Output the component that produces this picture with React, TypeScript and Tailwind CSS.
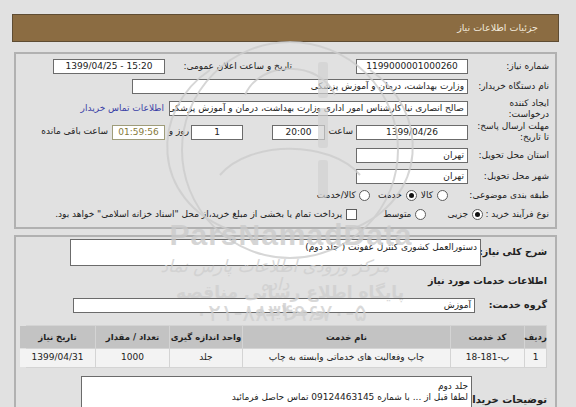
import React from 'react';

function Field({ className = '', children, ltr = false }: { className?: string; children?: React.ReactNode; ltr?: boolean }) {
  return (
    <div
      dir={ltr ? 'ltr' : 'rtl'}
      className={`h-[15px] shrink-0 bg-white border border-[#6b6b6b] flex items-center px-[3px] leading-[13px] overflow-hidden whitespace-nowrap ${className}`}
    >
      {children}
    </div>
  );
}

function Radio({ on = false }: { on?: boolean }) {
  return (
    <span className="w-[11px] h-[11px] shrink-0 rounded-full border border-[#5c5c5c] bg-white flex items-center justify-center">
      {on && <span className="w-[5px] h-[5px] rounded-full bg-[#111]" />}
    </span>
  );
}

function Label({ className = 'w-[75px]', children }: { className?: string; children: React.ReactNode }) {
  return <div className={`shrink-0 text-right leading-[11px] whitespace-nowrap ${className}`}>{children}</div>;
}

const cols = [
  { w: 'w-[21px]', head: 'ردیف', val: '1' },
  { w: 'w-[73px]', head: 'کد خدمت', val: 'پ-181-18' },
  { w: 'w-[207px]', head: 'نام خدمت', val: 'چاپ وفعالیت های خدماتی وابسته به چاپ' },
  { w: 'w-[72px]', head: 'واحد اندازه گیری', val: 'جلد' },
  { w: 'w-[73px]', head: 'تعداد / مقدار', val: '1000' },
  { w: 'w-[75px]', head: 'تاریخ نیاز', val: '1399/04/31' },
];

function Watermark() {
  return (
    <div className="absolute inset-0 pointer-events-none">
      <svg className="absolute left-0 top-0" width="576" height="407" viewBox="0 0 576 407" fill="none">
        <g stroke="#cdcdcd" strokeWidth="2" opacity="0.8">
          <circle cx="290" cy="150" r="108" />
          <path d="M230 230 C 150 200 150 110 210 70" />
          <path d="M350 230 C 430 200 430 110 370 70" />
          <path d="M245 95 C 260 60 320 60 335 95" />
          <path d="M220 175 C 250 140 330 140 360 175" />
        </g>
        <g fill="#d2d2d2" opacity="0.7">
          <rect x="318" y="62" width="10" height="36" rx="3" />
          <rect x="318" y="108" width="10" height="40" rx="3" />
          <rect x="318" y="160" width="10" height="38" rx="3" />
        </g>
      </svg>
      <div className="absolute left-[160px] top-[220px] w-[262px] text-center font-['Liberation_Sans',sans-serif] font-bold text-[30px] leading-[30px] tracking-[1px] text-[#cbcbcb] opacity-80">
        ParsNamadData
      </div>
      <div dir="rtl" className="absolute left-[150px] top-[257px] w-[250px] text-center text-[17px] leading-[18px] text-[#cfcfcf] opacity-80 italic">
        مرکز ورودی اطلاعات پارس نماد داده
      </div>
      <div dir="rtl" className="absolute left-[172px] top-[283px] w-[236px] text-center font-bold text-[17px] leading-[18px] text-[#cfcfcf] opacity-80">
        پایگاه اطلاع رسانی مناقصه و مزایده
      </div>
      <div dir="rtl" className="absolute left-[175px] top-[301px] w-[212px] text-center text-[24px] leading-[24px] text-[#d0d0d0] opacity-80">
        ۰۲۱-۸۸۳۴۹۶۷۰-۵
      </div>
    </div>
  );
}

export default function App() {
  return (
    <div dir="rtl" className="relative w-[576px] h-[407px] overflow-hidden bg-[#e1e1e1] font-['DejaVu_Sans',sans-serif] text-[9px] text-[#222]">
      <div className="pt-[14px] pl-[12px] pr-[17px]">
        <div className="h-[28px] bg-[#8b6c42] border border-[#5e4c33] flex items-center pr-[20px] text-[#f1e9da] text-[9.5px]">
          جزئیات اطلاعات نیاز
        </div>
      </div>

      <div className="mt-[10px] ml-[14px] mr-[19px] border-2 border-[#b1b1b1] pt-[2px] pb-[3px] pr-[6px]">
        <div className="flex items-center h-[20px]">
          <Label>شماره نیاز:</Label>
          <Field ltr className="mr-[6px] w-[112px] justify-center">1199000001000260</Field>
          <Label className="w-[127px] mr-[64px] pl-[4px]">تاریخ و ساعت اعلان عمومی:</Label>
          <Field ltr className="w-[112px] justify-center">1399/04/25 - 15:20</Field>
        </div>
        <div className="flex items-center h-[21px]">
          <Label>نام دستگاه خریدار:</Label>
          <Field className="mr-[6px] w-[336px]">وزارت بهداشت، درمان و آموزش پزشکی</Field>
        </div>
        <div className="flex items-center h-[23px]">
          <Label>
            ایجاد کننده
            <br />
            درخواست:
          </Label>
          <Field className="mr-[6px] w-[299px]">صالح انصاری نیا کارشناس امور اداری وزارت بهداشت، درمان و آموزش پزشکی</Field>
          <div className="mr-[5px] text-[#3a3fa6] whitespace-nowrap">اطلاعات تماس خریدار</div>
        </div>
        <div className="flex items-center h-[24px]">
          <Label>
            مهلت ارسال پاسخ:
            <br />
            تا تاریخ:
          </Label>
          <Field ltr className="mr-[6px] w-[112px] justify-center">1399/04/26</Field>
          <div className="mr-[3px] w-[28px] shrink-0 text-right">ساعت</div>
          <Field ltr className="w-[53px] justify-center">20:00</Field>
          <Field ltr className="mr-[29px] w-[52px] justify-center">1</Field>
          <div className="mr-[2px] w-[24px] shrink-0 text-right whitespace-nowrap">روز و</div>
          <Field ltr className="w-[53px] justify-center bg-[#f3f2c6] border-[#9e9c7a] text-[#85793a]">01:59:56</Field>
          <div className="mr-[4px] whitespace-nowrap">ساعت باقی مانده</div>
        </div>
        <div className="flex items-center h-[23px]">
          <Label>استان محل تحویل:</Label>
          <Field className="mr-[6px] w-[112px]">تهران</Field>
        </div>
        <div className="flex items-center h-[19px]">
          <Label>شهر محل تحویل:</Label>
          <Field className="mr-[6px] w-[112px]">تهران</Field>
        </div>
        <div className="flex items-center h-[19px]">
          <Label>طبقه بندی موضوعی:</Label>
          <div className="mr-[26px] flex items-center gap-[4px]">
            <Radio />
            <span>کالا</span>
          </div>
          <div className="mr-[4px] flex items-center gap-[4px]">
            <Radio on />
            <span>خدمت</span>
          </div>
          <div className="mr-[8px] flex items-center gap-[3px]">
            <Radio />
            <span>کالا/خدمت</span>
          </div>
        </div>
        <div className="flex items-center h-[19px]">
          <Label className="w-[56px]">نوع فرآیند خرید :</Label>
          <div className="mr-[10px] flex items-center gap-[4px]">
            <Radio on />
            <span>جزیی</span>
          </div>
          <div className="mr-[21px] flex items-center gap-[4px]">
            <Radio />
            <span>متوسط</span>
          </div>
          <div className="mr-[26px] flex items-center gap-[4px] whitespace-nowrap">
            <span className="w-[11px] h-[11px] shrink-0 border border-[#5c5c5c] bg-white" />
            <span>پرداخت تمام یا بخشی از مبلغ خرید،از محل "اسناد خزانه اسلامی" خواهد بود.</span>
          </div>
        </div>
      </div>

      <div className="mt-[6px] ml-[14px] mr-[19px] h-[200px] border-2 border-[#b1b1b1] pr-[8px]">
        <div className="mt-[2px] flex items-center">
          <div className="w-[64px] shrink-0 text-right font-bold text-[9.5px] whitespace-nowrap">شرح کلی نیاز:</div>
          <div className="mr-[2px] w-[411px] h-[27px] bg-white border border-[#6b6b6b] px-[3px] pt-[1px] leading-[13px]">
            دستورالعمل کشوری کنترل عفونت ( جلد دوم)
          </div>
        </div>
        <div className="mt-[8px] h-[14px] leading-[14px] font-bold text-[9.5px]">اطلاعات خدمات مورد نیاز</div>
        <div className="mt-[10px] flex items-center">
          <div className="w-[59px] shrink-0 text-right font-bold text-[9.5px] whitespace-nowrap">گروه خدمت:</div>
          <Field className="mr-[13px] w-[402px] h-[14px]">آموزش</Field>
        </div>
        <div className="mt-[12px] w-[521px] bg-[#d4d4d4] p-px flex flex-col gap-px">
          <div className="flex gap-px h-[22px]">
            {cols.map((c) => (
              <div key={c.head} className={`${c.w} shrink-0 grow bg-[#c3c3c3] flex items-center justify-center font-bold text-[8.5px] whitespace-nowrap`}>
                {c.head}
              </div>
            ))}
          </div>
          <div className="flex gap-px h-[18px]">
            {cols.map((c) => (
              <div key={c.head} className={`${c.w} shrink-0 grow bg-[#f3f3f3] flex items-center justify-center whitespace-nowrap`}>
                {c.val}
              </div>
            ))}
          </div>
        </div>
        <div className="mt-[8px] flex items-start">
          <div className="w-[72px] shrink-0 mt-[18px] text-right font-bold text-[10px] leading-[12px] whitespace-nowrap">توضیحات خریدار:</div>
          <div className="mr-[3px] w-[391px] h-[56px] bg-white border border-[#6b6b6b] px-[3px] pt-[4px] leading-[11px]">
            جلد دوم
            <br />
            لطفا قبل از ... با شماره 09124463145 تماس حاصل فرمائید
          </div>
        </div>
      </div>

      <Watermark />
    </div>
  );
}
